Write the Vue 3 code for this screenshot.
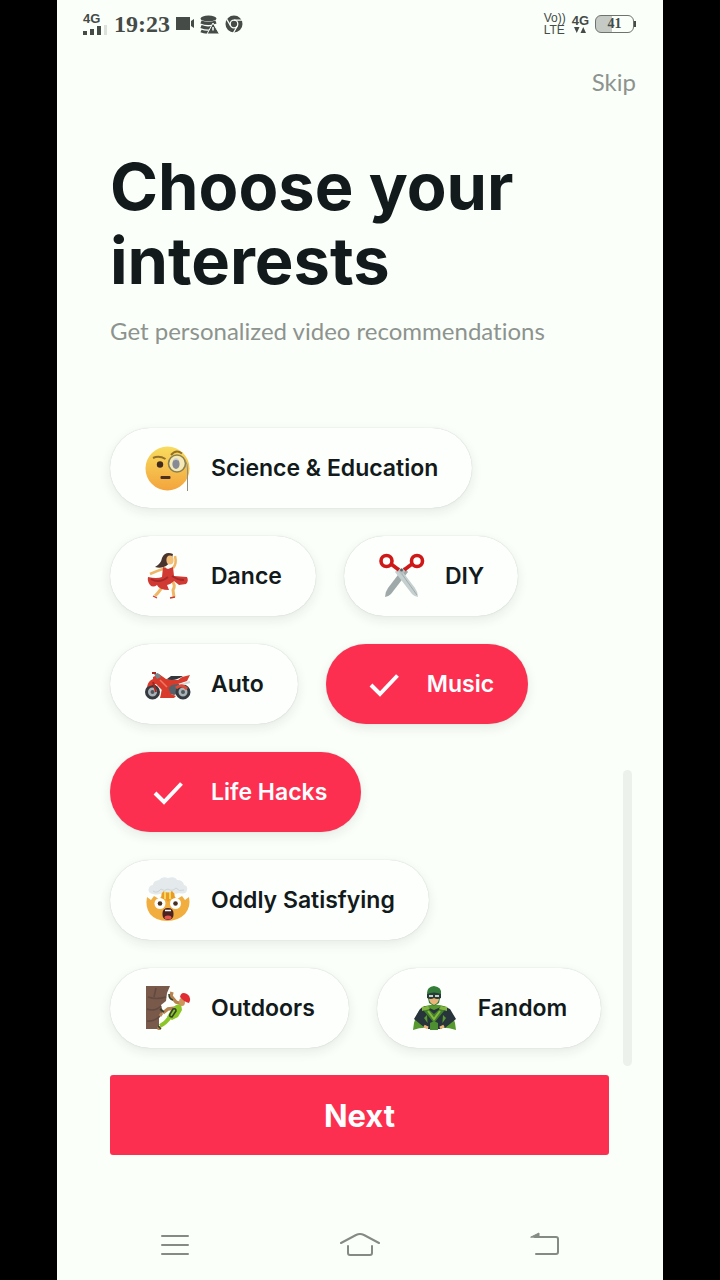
<template>
  <div class="screen">
    <div class="phone">
      <header class="status-bar">
        <div class="status-left">
          <div class="signal">
            <span class="signal-label">4G</span>
            <svg width="24" height="10" viewBox="0 0 24 10">
              <path d="M0 6h4v4H0zM7 4h4v6H7zM14 1h4v9h-4z" fill="#454b47" />
              <path d="M21 0h3v10h-3z" fill="#dde1dc" />
            </svg>
          </div>
          <span class="clock">19:23</span>
          <svg width="18" height="14" viewBox="0 0 18 14">
            <path d="M0 0h14v13H0zM15 4l3-2v9l-3-2z" fill="#454b47" />
          </svg>
          <svg width="19" height="19" viewBox="0 0 19 19">
            <g fill="none" stroke="#454b47" stroke-width="3">
              <path d="M1 7q7.500 3 15 0M1 11.500q6 2.500 11 1M1 16q4 1.800 9 1" />
            </g>
            <ellipse cx="8.500" cy="3.500" rx="8" ry="3" fill="#454b47" />
            <path d="M13 8l6.500 11H7z" fill="#454b47" stroke="#fbfffa" />
            <path d="M13 12v3.500" stroke="#fbfffa" stroke-width="1.500" />
          </svg>
          <svg width="18" height="18" viewBox="0 0 18 18">
            <circle cx="9" cy="9" r="8.500" fill="#454b47" />
            <g fill="none" stroke="#fbfffa" stroke-width="1.300">
              <circle cx="9" cy="9" r="3.800" />
              <path d="M9 5.200h8M5.700 11L1.800 4.300M12.300 11l-4 7" />
            </g>
          </svg>
        </div>
        <div class="status-right">
          <div class="stack volte"><span>Vo))</span><span>LTE</span></div>
          <div class="stack">
            <span class="net">4G</span>
            <svg width="12" height="6" viewBox="0 0 12 6">
              <path d="M0 0h5.500L2.750 6zM6.500 6H12L9.250 0z" fill="#454b47" />
            </svg>
          </div>
          <div class="battery"><span>41</span></div>
        </div>
      </header>

      <div class="top-actions">
        <button class="skip" type="button">Skip</button>
      </div>

      <main>
        <h1>Choose your interests</h1>
        <p class="subtitle">Get personalized video recommendations</p>

        <div class="interests">
          <div class="chips">
            <button
              v-for="item in interests"
              :key="item.name"
              type="button"
              class="chip"
              :class="{ selected: item.selected }"
              :aria-pressed="item.selected"
              @click="item.selected = !item.selected"
            >
              <svg class="chip-icon" viewBox="0 0 46 46" aria-hidden="true">
                <path v-if="item.selected" d="M10 24l9 9 17.500-18.500" fill="none" stroke="#fff" stroke-width="4" />

                <g v-else-if="item.icon === 'monocle'" fill="none">
                  <defs>
                    <linearGradient id="face" x2="0" y2="1">
                      <stop offset="0" stop-color="#f8dc5e" />
                      <stop offset="1" stop-color="#f3a43c" />
                    </linearGradient>
                  </defs>
                  <circle cx="22.500" cy="23.500" r="22" fill="url(#face)" />
                  <path d="M8 13q6-3 12.500 1" stroke="#93702a" stroke-width="2" />
                  <path d="M26 10q5-6 11-1.500" stroke="#93702a" stroke-width="2" />
                  <circle cx="15" cy="19.500" r="3.200" fill="#3f2a20" />
                  <rect x="15.500" y="31" width="10" height="3" rx="1" fill="#4b2f20" />
                  <circle cx="32" cy="18.500" r="8.500" fill="#f5e9b8" stroke="#8a8152" stroke-width="1.600" />
                  <ellipse cx="31" cy="19" rx="3.600" ry="5" fill="#858a96" />
                  <path d="M29 15q2-2 4 0" stroke="#c9ccd2" stroke-width="1.500" />
                  <path d="M40.500 16q2 3 2 8v22" stroke="#8f8f80" stroke-width="1" />
                </g>

                <g v-else-if="item.icon === 'dancer'" fill="none">
                  <path d="M19 30q-2 6-9 13M27 28q4 4 1 9l1 7" stroke="#efb765" stroke-width="3" />
                  <path d="M8 43l4 2M25 45l5-1" stroke="#cc3a30" stroke-width="1.300" />
                  <path d="M28 1q-8-3-11 4-1 6-7 9 6 2 11-1l5-4z" fill="#49342e" />
                  <path d="M21 15q-7 2-16 6M28 15q4-4 2-12" stroke="#efb765" stroke-width="2.600" />
                  <ellipse cx="25" cy="7" rx="3.600" ry="4.500" fill="#f3c07a" />
                  <path d="M18 14l5 2 5-2 1 9 13 1q2 4-1 7l-7 1-5-4q-3 3-7 4l2 5q-10 0-12-5-4 3-7 0Q2 28 3 24q9 2 14 0z" fill="#d03a32" />
                  <path d="M6 26q8 5 17-2M27 23q6 4 12 4" stroke="#a52929" stroke-width="2" />
                </g>

                <g v-else-if="item.icon === 'scissors'" fill="none">
                  <path d="M25 14l4 5L12 41q-3 3-6 3 0-5 3-9z" fill="#9fa9aa" />
                  <path d="M20 14l-4 5 17 22q3 3 6 3 0-5-3-9z" fill="#c5cfcf" />
                  <path d="M20 17l18 25" stroke="#a3adae" stroke-width="1" />
                  <g stroke="#cf1818" stroke-width="3.600">
                    <circle cx="7.500" cy="8" r="5.500" />
                    <circle cx="38" cy="8" r="5.500" />
                    <path d="M12 11l8 6M33 11l-8 6" />
                  </g>
                  <path d="M19 18l3.500-3 4 3-4 4z" fill="#b7c0c0" />
                  <circle cx="22.500" cy="17" r="1.500" fill="#5a6163" />
                </g>

                <g v-else-if="item.icon === 'motorcycle'" fill="none">
                  <path d="M20 20l14 3 4 8-9 3-12-3z" fill="#566068" />
                  <g fill="#a9b3b7" stroke="#343a3f" stroke-width="3">
                    <circle cx="7.500" cy="31" r="6" />
                    <circle cx="38" cy="31" r="6" />
                  </g>
                  <circle cx="7.500" cy="31" r="2" fill="#51585c" />
                  <circle cx="38" cy="31" r="2" fill="#51585c" />
                  <path d="M8 16l6-3 7 5 12 1 4-3 8-2-3 6-9 3-6 1-4 3 3 6 5 2-2 2H15l2-8-6-6-9 3q1-6 6-8z" fill="#d83a2b" />
                  <path d="M11 20l10-1 3 8-2 8-6 1 1-9z" fill="#d83a2b" />
                  <path d="M22 18q7 3 16-3l-12 0z" fill="#33363b" />
                  <path d="M9 13l4-1 3 4-4 2z" fill="#76868d" />
                  <path d="M7 12h4M8 21l3 10" stroke="#a8251f" stroke-width="2" />
                  <path d="M35 24l10-3" stroke="#d4dada" stroke-width="2" />
                  <path d="M31 27q6-5 11 1" stroke="#dd4a38" stroke-width="3" />
                  <path d="M15 19l7 7" stroke="#f17662" stroke-width="1.500" />
                </g>

                <g v-else-if="item.icon === 'mindblown'">
                  <path d="M2 20l4 3 3-4 5 3 3-3h12l3 3 5-3 3 4 4-3q2 10-4 17-7 7-18 7T5 37Q0 30 2 20z" fill="#f2ad3f" />
                  <path d="M16 24l1-13h12l1 13-4-3-3 4-3-4z" fill="#e99b25" />
                  <path d="M20 14v8M25 14v8" stroke="#f8d65c" stroke-width="2" />
                  <path d="M8 17q-6-1-4-6 1-3 4-3 0-4 6-5 3-4 9-2 7-2 9 2 6 0 7 5 4 1 3 5-1 5-8 3-5 2-7-2-4 3-8 0-4 5-11 3z" fill="#e4e9eb" />
                  <path d="M8 14q4 3 8-2 3 3 7 0 4 3 8-1 3 4 8 2" fill="none" stroke="#cfd6d8" stroke-width="1" />
                  <circle cx="15" cy="26.500" r="5.500" fill="#fff" />
                  <circle cx="30.500" cy="26.500" r="5.500" fill="#fff" />
                  <circle cx="15" cy="26.500" r="2.300" fill="#48301f" />
                  <circle cx="30.500" cy="26.500" r="2.300" fill="#48301f" />
                  <rect x="17.500" y="31" width="11" height="12" rx="5" fill="#4a2420" />
                  <path d="M20 33.500h6" stroke="#fff" stroke-width="1.500" />
                  <ellipse cx="23" cy="40.500" rx="3.500" ry="2" fill="#e3574d" />
                </g>

                <g v-else-if="item.icon === 'climber'" fill="none">
                  <path d="M1 1h24l-3 7-1 8-5 4 2 7-4 6v11H1z" fill="#78594a" />
                  <path d="M3 12q8 3 18 0M2 24q8 3 14-3M2 36q7 1 13-5M11 3l-2 9" stroke="#624a40" stroke-width="1.600" />
                  <path d="M37 19l-6-2-5-6 1-4M31 23l-8 1-5 4" stroke="#b98350" stroke-width="3.400" />
                  <path d="M31 20l5-1 1 6-4 7-6 3-5-3q4-8 9-12z" fill="#8bc526" />
                  <path d="M25 32q-4 6-10 9" stroke="#8bc526" stroke-width="4" />
                  <path d="M17 28l-2 3M14 41v4" stroke="#b98350" stroke-width="3" />
                  <ellipse cx="37" cy="17" rx="3" ry="4" fill="#cc965f" />
                  <path d="M35 12q1-6 7-3 5 3 2 9-5-1-9-6z" fill="#e02c32" />
                  <path d="M24 9q0 5 4 6M15 24l4 3M28 24q3-1 3 2l-4 6q-3 0-2-3zM13 41l3 3" stroke="#36402d" stroke-width="1.600" />
                </g>

                <g v-else fill="none">
                  <path d="M10 22q13-5 25 0 8 9 9 23-12-4-22-1-10-3-21 1 1-14 9-23z" fill="#58992f" />
                  <path d="M13 21l9 4 9-4 7 3 6 10-11 9-4-3 5-7-3-3-1 14H16l-1-14-3 3 5 7-4 3L2 34l6-10z" fill="#27343b" />
                  <path d="M14 22l8 7 8-7 2 4-10 12-10-12z" fill="#417e2d" />
                  <path d="M16 26l6 8 6-8" stroke="#87b93b" stroke-width="2" />
                  <path d="M10 22l6-1 2 3-8 2zM35 22l-6-1-2 3 8 2z" fill="#80b63c" />
                  <path d="M15 8q0-6 7-7 8 1 7 8l-2 9-5 3-5-3z" fill="#347c39" />
                  <path d="M17 13q5-3 10 0 0 5-5 7-5-2-5-7z" fill="#eab578" />
                  <path d="M15 9q7-3 14 0v4q-4 2-7 0-3 2-7 0z" fill="#263b36" />
                  <path d="M17 11h4M23 11h4" stroke="#fff" stroke-width="1.500" />
                  <path d="M18 38l4-2 4 2v7h-8z" fill="#4d8e32" />
                  <path d="M12 41l4 2M32 41l-4 2" stroke="#edb57a" stroke-width="3" />
                </g>
              </svg>
              <span>{{ item.name }}</span>
            </button>
          </div>
          <div class="scroll-thumb"></div>
        </div>

        <button class="next" type="button">Next</button>
      </main>

      <nav class="nav-bar">
        <button type="button" aria-label="Recent apps">
          <svg width="40" height="28" viewBox="0 0 40 28">
            <path d="M7 5h26M7 14h26M7 23h26" />
          </svg>
        </button>
        <button type="button" aria-label="Home">
          <svg width="40" height="28" viewBox="0 0 40 28">
            <path d="M1 12l15-8q4-2 8 0l15 8M8 15v7q0 2 2 2h20q2 0 2-2v-7" />
          </svg>
        </button>
        <button type="button" aria-label="Back">
          <svg width="40" height="28" viewBox="0 0 40 28">
            <path d="M10 6h21q2 0 2 2v13q0 2-2 2H11" />
            <path d="M6 6l8-4v4z" fill="#848a84" stroke-width="1" />
          </svg>
        </button>
      </nav>
    </div>
  </div>
</template>

<script setup>
import { ref } from 'vue';

const interests = ref([
  { name: 'Science & Education', icon: 'monocle', selected: false },
  { name: 'Dance', icon: 'dancer', selected: false },
  { name: 'DIY', icon: 'scissors', selected: false },
  { name: 'Auto', icon: 'motorcycle', selected: false },
  { name: 'Music', icon: 'music', selected: true },
  { name: 'Life Hacks', icon: 'hacks', selected: true },
  { name: 'Oddly Satisfying', icon: 'mindblown', selected: false },
  { name: 'Outdoors', icon: 'climber', selected: false },
  { name: 'Fandom', icon: 'hero', selected: false },
]);
</script>

<style>
body {
  background: #000;
}
</style>

<style scoped>
.screen {
  padding: 0 57px;
  font-family: Lato, "Liberation Sans", sans-serif;
  font-variant-ligatures: none;
}

.phone {
  display: flex;
  flex-direction: column;
  min-height: 100vh;
  background: #fbfffa;
  color: #121a1c;
}

button {
  font-family: inherit;
  border: none;
  background: none;
  padding: 0;
  cursor: pointer;
}

.status-bar {
  display: flex;
  justify-content: space-between;
  align-items: center;
  height: 48px;
  padding: 0 29px 0 26px;
  color: #454b47;
}

.status-left,
.status-right {
  display: flex;
  align-items: center;
  gap: 6px;
}

.signal,
.stack {
  display: flex;
  flex-direction: column;
  font-family: "Liberation Sans", sans-serif;
  font-size: 12px;
  line-height: 12px;
}

.stack {
  align-items: center;
}

.signal-label,
.net {
  font-size: 13px;
  font-weight: bold;
}

.volte {
  align-items: flex-start;
}

.clock {
  margin-left: 1px;
  font-family: "Liberation Serif", serif;
  font-weight: bold;
  font-size: 24px;
  line-height: 28px;
}

.battery {
  position: relative;
  box-sizing: border-box;
  width: 39px;
  height: 18px;
  border: 1px solid #6d736e;
  border-radius: 6px;
  background: linear-gradient(90deg, #c6cac5 42%, transparent 42%);
  font-family: "Liberation Serif", serif;
  font-weight: bold;
  font-size: 14px;
  line-height: 16px;
  text-align: center;
}

.battery::after {
  content: "";
  position: absolute;
  top: 5px;
  right: -3px;
  width: 2px;
  height: 6px;
  background: #454b47;
}

.top-actions {
  display: flex;
  justify-content: flex-end;
  padding: 19px 27px 0;
}

.skip {
  color: #8d938e;
  font-size: 24px;
  line-height: 30px;
}

main {
  padding: 0 54px 0 53px;
}

h1 {
  margin: 53px 0 0;
  font-family: Inter, sans-serif;
  font-size: 65px;
  font-weight: 700;
  line-height: 74px;
}

.subtitle {
  margin: 18px 0 0;
  color: #8d938e;
  font-size: 24px;
  line-height: 30px;
}

.interests {
  position: relative;
  margin-top: 82px;
}

.chips {
  display: flex;
  flex-wrap: wrap;
  gap: 28px;
}

.chip {
  display: flex;
  align-items: center;
  gap: 20px;
  height: 80px;
  padding: 0 34px 0 35px;
  border-radius: 40px;
  background: #fdfffc;
  box-shadow: 0 0 1px 0 rgba(20, 30, 20, 0.25), 0 4px 12px rgba(20, 30, 20, 0.09);
  color: #121a1c;
  font-family: Inter, sans-serif;
  font-size: 23px;
  font-weight: 600;
  line-height: 30px;
}

.chip.selected {
  background: #fd2f51;
  color: #fff;
}

.chip-icon {
  width: 46px;
  height: 46px;
}

.scroll-thumb {
  position: absolute;
  top: 342px;
  right: -23px;
  width: 9px;
  height: 296px;
  border-radius: 5px;
  background: #edf1ec;
}

.next {
  display: block;
  width: 100%;
  height: 80px;
  margin-top: 27px;
  border-radius: 3px;
  background: #fd2f51;
  color: #fff;
  font-family: Inter, sans-serif;
  font-size: 31px;
  font-weight: 700;
}

.nav-bar {
  display: flex;
  justify-content: space-between;
  margin-top: auto;
  padding: 0 98px 21px;
}

.nav-bar svg {
  display: block;
  fill: none;
  stroke: #848a84;
  stroke-width: 2;
  stroke-linecap: round;
}
</style>
